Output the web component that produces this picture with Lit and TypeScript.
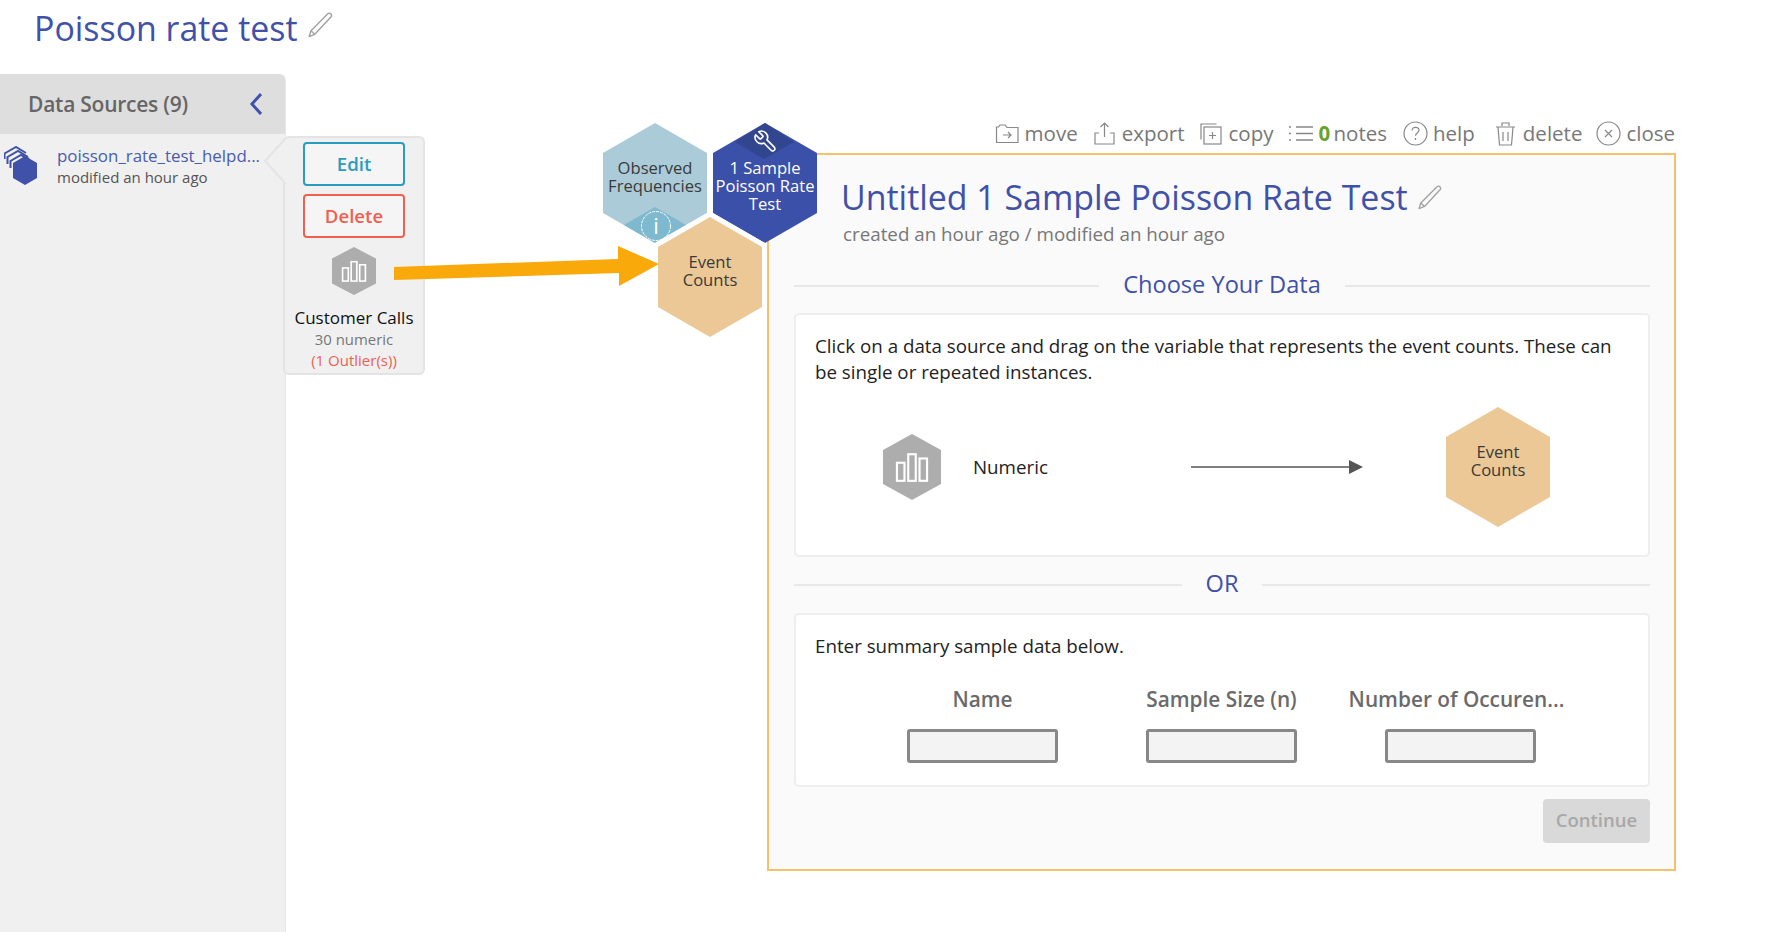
import { LitElement, html, css, svg } from "lit";
import { customElement } from "lit/decorators.js";

const HEX = "52,0 104,30 104,90 52,120 0,90 0,30";

const bars = svg`<g fill="none" stroke="#fff" stroke-width="2"><rect x="13" y="27" width="7" height="17"/><rect x="23.5" y="19" width="7" height="25"/><rect x="34" y="23" width="7" height="21"/></g>`;
const grayHex = (cls: string) => html`<svg class=${cls} viewBox="0 0 54 62" preserveAspectRatio="none"><polygon points="27,0 54,15 54,47 27,62 0,47 0,15" fill="#adadad"/>${bars}</svg>`;
const pencil = (cls: string) => html`<svg class=${cls} viewBox="0 0 24 24" fill="none" stroke="#a2a2a2" stroke-width="1.3" stroke-linejoin="round"><path d="M19.2 1.6c.9-.8 2.2-.5 2.9.3.7.8.7 1.9 0 2.7L7.2 20.6 2 22.6l1.7-5.3z"/><path d="M3.7 17.3l3.5 3.3"/></svg>`;

@customElement("app-root")
export class AppRoot extends LitElement {
  static styles = css`
    :host { display: block; width: 1791px; height: 932px; overflow: hidden; background: #fff; font-family: "Open Sans", "DejaVu Sans", sans-serif; color: #222; }
    * { box-sizing: border-box; }
    svg { display: block; }
    .title-row { height: 74px; display: flex; align-items: flex-start; padding: 7px 0 0 34px; gap: 9px; }
    h1 { margin: 0; font-size: 33.9px; line-height: 42px; font-weight: 400; color: #3f51a8; }
    .pencil-big { width: 26px; height: 26px; margin-top: 5px; }
    .main { position: relative; display: flex; height: 858px; }
    .sidebar { width: 286px; flex: none; background: #f0f0f0; border-right: 1px solid #e8e8e8; border-top-right-radius: 6px; }
    .side-head { height: 60px; background: #dedede; border-top-right-radius: 6px; display: flex; align-items: center; justify-content: space-between; padding: 0 22px 0 28px; }
    .side-head span { font-size: 21px; font-weight: 600; color: #666; letter-spacing: -0.25px; }
    .chev { width: 14px; height: 24px; }
    .ds-item { display: flex; gap: 20px; padding: 12px 0 0 4px; }
    .ds-icon { width: 33px; height: 40px; flex: none; }
    .ds-name { font-size: 16.9px; line-height: 20px; color: #4a5cae; white-space: nowrap; }
    .ds-mod { font-size: 15px; line-height: 22px; color: #555; white-space: nowrap; }

    .popover { position: absolute; left: 283px; top: 62px; width: 142px; height: 239px; background: #f0f0f0; border: 2px solid #e4e4e4; border-radius: 6px; display: flex; flex-direction: column; align-items: center; padding-top: 4px; z-index: 2; }
    .pop-tip { position: absolute; left: -22px; top: -1px; width: 24px; height: 48px; }
    .btn { width: 102px; height: 44px; background: #f5f5f5; border: 2px solid; border-radius: 4px; display: flex; align-items: center; justify-content: center; font-size: 18.6px; font-weight: 600; padding-bottom: 1px; }
    .btn.edit { color: #2a9cc0; border-color: #2a9cc0; margin-bottom: 8px; }
    .btn.del { color: #ef5f52; border-color: #ef5f52; }
    .pop-hex { width: 44px; height: 48px; margin-top: 9px; }
    .cc { font-size: 17px; line-height: 22px; margin-top: 12px; color: #111; white-space: nowrap; }
    .num { font-size: 14.9px; line-height: 20px; color: #777; margin-top: 0; }
    .outl { font-size: 15px; line-height: 20px; color: #ef5f52; margin-top: 1px; }

    .canvas { flex: 1; padding: 47px 0 0 481px; }
    .stage { width: 909px; }
    .toolbar { height: 24px; display: flex; justify-content: flex-end; align-items: center; gap: 14px; padding-right: 1px; margin-bottom: 8px; font-size: 20.5px; color: #777; white-space: nowrap; }
    .tool { display: flex; align-items: center; gap: 5px; }
    .tool svg { width: 25px; height: 25px; }
    .tool b { color: #6aa32c; font-weight: 700; margin-right: -2px; }
    .tool.gap-r3 { margin-right: 4px; }
    .tool.gap-r2 { margin-right: 2px; }
    .tool.gap-r1 { margin-right: 1px; }
    .panel { height: 718px; background: #fafafa; border: 2px solid #f5c26b; padding: 20px 24px 0 25px; }
    .p-title { display: flex; align-items: center; gap: 9px; padding-left: 47px; }
    h2 { margin: 0; font-size: 33.9px; line-height: 44px; font-weight: 400; color: #3f51a8; white-space: nowrap; }
    .pencil-mid { width: 25px; height: 25px; }
    .p-sub { padding-left: 49px; margin-top: 3px; font-size: 18.8px; line-height: 24px; color: #777; }
    .rule { display: flex; align-items: center; gap: 24px; color: #3f51a8; font-size: 23.6px; line-height: 32px; }
    .rule::before, .rule::after { content: ""; flex: 1; height: 2px; background: #e8e8e8; margin-top: 3px; }
    .rule.choose { margin-top: 22px; }
    .rule.or { margin-top: 11px; line-height: 30px; }
    .card { background: #fff; border: 2px solid #eee; border-radius: 5px; padding: 18px 19px 0 19px; font-size: 18.75px; line-height: 26px; color: #222; }
    .card.one { margin-top: 13px; height: 244px; }
    .card.two { margin-top: 15px; height: 174px; }
    .diagram { display: flex; align-items: center; margin-top: 22px; padding-left: 68px; height: 120px; }
    .d-hex { width: 58px; height: 66px; flex: none; }
    .d-num { width: 76px; margin-left: 32px; flex: none; white-space: nowrap; }
    .d-arrow { width: 172px; height: 16px; margin-left: 142px; flex: none; }
    .hex { position: relative; width: 104px; height: 120px; flex: none; }
    .hex > svg { position: absolute; inset: 0; width: 100%; height: 100%; overflow: visible; }
    .hex-t { position: absolute; left: 0; right: 0; text-align: center; font-size: 16.6px; line-height: 18px; color: #3a3a3a; white-space: nowrap; }
    .d-event { margin-left: 83px; }
    .fields { display: flex; gap: 88px; margin: 26px 0 0 92px; }
    .field { width: 151px; display: flex; flex-direction: column; align-items: center; }
    .field label { font-size: 20.8px; line-height: 28px; font-weight: 600; color: #6a6a6a; white-space: nowrap; }
    .field label.shift { margin-right: 8px; }
    .input { width: 151px; height: 34px; margin-top: 16px; background: #f3f3f3; border: 3px solid #888; border-radius: 3px; }
    .foot { display: flex; justify-content: flex-end; margin-top: 12px; }
    .continue { width: 107px; height: 44px; background: #d9d9d9; border-radius: 4px; color: #a8a8a8; font-size: 18.5px; font-weight: 600; display: flex; align-items: center; justify-content: center; padding-bottom: 3px; }

    .n-obs, .n-poi, .n-evt { position: absolute; z-index: 3; }
    .n-obs { left: 603px; top: 49px; }
    .n-poi { left: 713px; top: 49px; }
    .n-evt { left: 658px; top: 143px; z-index: 4; }
    .t-obs { top: 36px; }
    .t-poi { top: 36px; color: #fff; font-weight: 500; }
    .t-evt { top: 36px; }
    .t-d { top: 36px; }
    .wrench { position: absolute !important; left: 40px !important; top: 6px !important; width: 25px !important; height: 25px !important; }
    .big-arrow { position: absolute; left: 390px; top: 168px; width: 272px; height: 50px; z-index: 5; }
  `;

  render() {
    return html`
      <div class="title-row"><h1>Poisson rate test</h1>${pencil("pencil-big")}</div>
      <div class="main">
        <aside class="sidebar">
          <div class="side-head"><span>Data Sources (9)</span>
            <svg class="chev" viewBox="0 0 14 24" fill="none" stroke="#3f51a8" stroke-width="3"><path d="M12 2L3 12l9 10"/></svg></div>
          <div class="ds-item">
            <svg class="ds-icon" viewBox="0 0 33 40">
              <g fill="none" stroke="#3f51a8" stroke-width="2"><path d="M0.5 13V7.500L12 1l10 6"/><path d="M3.500 18V11L14 5l10 6"/><path d="M6.500 22V15L17 9l8 4"/></g>
              <polygon points="21,10 33,17 33,32 21,39 9,32 9,17" fill="#3f51a8"/>
            </svg>
            <div><div class="ds-name">poisson_rate_test_helpd...</div><div class="ds-mod">modified an hour ago</div></div>
          </div>
        </aside>
        <div class="popover">
          <svg class="pop-tip" viewBox="0 0 24 48"><path d="M23 1L2 24l21 23" fill="#f0f0f0" stroke="#e4e4e4" stroke-width="2"/><rect x="22" y="2" width="3" height="44" fill="#f0f0f0"/></svg>
          <div class="btn edit">Edit</div><div class="btn del">Delete</div>
          ${grayHex("pop-hex")}
          <div class="cc">Customer Calls</div><div class="num">30 numeric</div><div class="outl">(1 Outlier(s))</div>
        </div>
        <div class="canvas"><div class="stage">
          <div class="toolbar">
            <div class="tool"><svg viewBox="0 0 25 25" fill="none" stroke="#888" stroke-width="1.2"><path d="M1.500 21.500V6h2l1.500-2h5l2 2.500h11v15z"/><path d="M8 14h8M13 11l3 3-3 3"/></svg>move</div>
            <div class="tool"><svg viewBox="0 0 25 25" fill="none" stroke="#888" stroke-width="1.2"><path d="M12.500 16V2M8.500 6l4-4 4 4M7 12H3v11h19V12h-4"/></svg>export</div>
            <div class="tool gap-r1"><svg viewBox="0 0 25 25" fill="none" stroke="#888" stroke-width="1.2"><path d="M3 18.500V3h15.500"/><rect x="6" y="6" width="17" height="17"/><path d="M14.500 11v7M11 14.500h7"/></svg>copy</div>
            <div class="tool gap-r2"><svg viewBox="0 0 25 25" fill="none" stroke="#888" stroke-width="1.300"><path d="M8 6h17M8 12.500h17M8 19h17M1 6h2M1 12.500h2M1 19h2"/></svg><span><b>0</b> notes</span></div>
            <div class="tool gap-r3"><svg viewBox="0 0 25 25" fill="none" stroke="#888" stroke-width="1.200"><circle cx="12.500" cy="12.500" r="11.500"/><path d="M9 9.500c0-2 1.600-3.200 3.500-3.200s3.500 1.200 3.500 3c0 2.700-3.500 2.700-3.500 5.500M12.500 17v2"/></svg>help</div>
            <div class="tool"><svg viewBox="0 0 25 25" fill="none" stroke="#888" stroke-width="1.200"><path d="M3 6h19M9 5V2h7v3M5 6l1.500 18h12L20 6M10 11v9M15 11v9"/></svg>delete</div>
            <div class="tool"><svg viewBox="0 0 25 25" fill="none" stroke="#888" stroke-width="1.200"><circle cx="12.500" cy="12.500" r="11.500"/><path d="M9 9l7 7M16 9l-7 7"/></svg>close</div>
          </div>
          <section class="panel">
            <div class="p-title"><h2>Untitled 1 Sample Poisson Rate Test</h2>${pencil("pencil-mid")}</div>
            <div class="p-sub">created an hour ago / modified an hour ago</div>
            <div class="rule choose">Choose Your Data</div>
            <div class="card one">
              Click on a data source and drag on the variable that represents the event counts. These can be single or repeated instances.
              <div class="diagram">
                ${grayHex("d-hex")}
                <div class="d-num">Numeric</div>
                <svg class="d-arrow" viewBox="0 0 172 16"><path d="M0 8h158" stroke="#555" stroke-width="1.500"/><polygon points="158,1 172,8 158,15" fill="#555"/></svg>
                <div class="hex d-event"><svg viewBox="0 0 104 120"><polygon points=${HEX} fill="#ebc896"/></svg><div class="hex-t t-d">Event<br>Counts</div></div>
              </div>
            </div>
            <div class="rule or">OR</div>
            <div class="card two">
              Enter summary sample data below.
              <div class="fields">
                <div class="field"><label>Name</label><div class="input"></div></div>
                <div class="field"><label>Sample Size (n)</label><div class="input"></div></div>
                <div class="field"><label class="shift">Number of Occuren...</label><div class="input"></div></div>
              </div>
            </div>
            <div class="foot"><div class="continue">Continue</div></div>
          </section>
        </div></div>
        <div class="hex n-obs">
          <svg viewBox="0 0 104 120"><polygon points=${HEX} fill="#abcbd8"/><polygon points="52,84 83,102 52,120 21,102" fill="#7fb9cf"/><circle cx="53" cy="103" r="14.500" fill="#7fb9cf" stroke="#fff" stroke-width="1" stroke-dasharray="3 1"/><text x="53" y="111" text-anchor="middle" fill="#fff" font-size="22" font-family="Open Sans, sans-serif">i</text></svg>
          <div class="hex-t t-obs">Observed<br>Frequencies</div>
        </div>
        <div class="hex n-poi">
          <svg viewBox="0 0 104 120"><polygon points=${HEX} fill="#3b50a8"/><polygon points="52,0 81,19 51,36 22,19" fill="#32458f"/></svg>
          <svg class="wrench" viewBox="0 0 24 24" fill="none" stroke="#fff" stroke-width="1.600" stroke-linejoin="round"><g transform="translate(24 0) scale(-1 1)"><path d="M14.700 6.300a1 1 0 0 0 0 1.400l1.600 1.600a1 1 0 0 0 1.400 0l3.770-3.770a6 6 0 0 1-7.940 7.940l-6.910 6.910a2.120 2.120 0 0 1-3-3l6.910-6.910a6 6 0 0 1 7.940-7.940l-3.760 3.760z"/></g></svg>
          <div class="hex-t t-poi">1 Sample<br>Poisson Rate<br>Test</div>
        </div>
        <div class="hex n-evt">
          <svg viewBox="0 0 104 120"><polygon points=${HEX} fill="#ebc896" stroke="#fff" stroke-width="10" paint-order="stroke"/></svg>
          <div class="hex-t t-evt">Event<br>Counts</div>
        </div>
        <svg class="big-arrow" viewBox="0 0 272 50"><polygon points="4,25 228,17 228,4 269,22 229,44 229,31 4,38" fill="#f9a90a"/></svg>
      </div>
    `;
  }
}
